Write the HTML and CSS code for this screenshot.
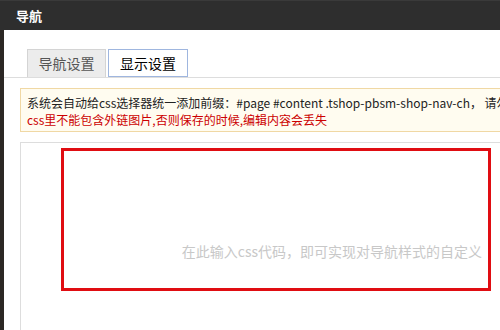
FILE: index.html
```html
<!DOCTYPE html>
<html lang="zh-CN">
<head>
    <meta charset="UTF-8">
    <title>导航</title>
    <link rel="stylesheet" href="styles.css">
</head>
<body>
    <div class="topbar">导航</div>
    <div class="dialog">
        <div class="tabs">
            <div class="tab">导航设置</div>
            <div class="tab active">显示设置</div>
        </div>
        <div class="notice">
            <div>系统会自动给css选择器统一添加前缀：#page #content .tshop-pbsm-shop-nav-ch， 请勿重复添加</div>
            <div class="warn">css里不能包含外链图片,否则保存的时候,编辑内容会丢失</div>
        </div>
        <div class="editor">
            <div class="code-box">
                <span class="placeholder">在此输入css代码，即可实现对导航样式的自定义</span>
            </div>
        </div>
    </div>
</body>
</html>
```

FILE: styles.css
```css
body {
    margin: 0;
    padding: 0;
    background-color: #2b2724;
    font-family: 'Noto Sans CJK SC', 'Liberation Sans', sans-serif;
    overflow: hidden;
}
.topbar {
    height: 29px;
    border-top: 1px solid #3a3a3a;
    background-color: #2e2e2e;
    color: #fff;
    font-size: 13px;
    font-weight: bold;
    line-height: 29px;
    padding-left: 16px;
}
.dialog {
    margin-left: 4px;
    height: 300px;
    background-color: #fff;
    overflow: hidden;
}
.tabs {
    display: flex;
    align-items: flex-end;
    gap: 2px;
    padding: 19px 0 0 23px;
    border-bottom: 1px solid #ddd;
}
.tab {
    width: 77px;
    height: 27px;
    border: 1px solid #d4d4d4;
    border-bottom: none;
    background-color: #ececec;
    color: #555;
    font-size: 14px;
    line-height: 27px;
    text-align: center;
}
.tab.active {
    width: 78px;
    height: 26px;
    line-height: 26px;
    border: 1px solid #9fb6df;
    background-color: #fff;
    color: #000;
}
.notice {
    margin: 10px 0 0 16px;
    height: 32px;
    padding: 5px 6px;
    border: 1px solid #f0d8a4;
    border-right: none;
    background-color: #fffcf0;
    color: #222;
    font-size: 12px;
    line-height: 17px;
    white-space: nowrap;
    overflow: hidden;
}
.warn {
    color: #cc0000;
}
.editor {
    margin: 10px 0 0 16px;
    height: 200px;
    border-top: 1px solid #ddd;
    border-left: 1px solid #ddd;
    padding: 5px 0 0 40px;
}
.code-box {
    width: 418px;
    height: 137px;
    border: 3px solid #e00d12;
    display: flex;
    align-items: flex-end;
    justify-content: flex-end;
    padding-right: 6px;
}
.placeholder {
    color: #c8c8c8;
    font-size: 14px;
    line-height: 18px;
    margin-bottom: 28px;
}
```
